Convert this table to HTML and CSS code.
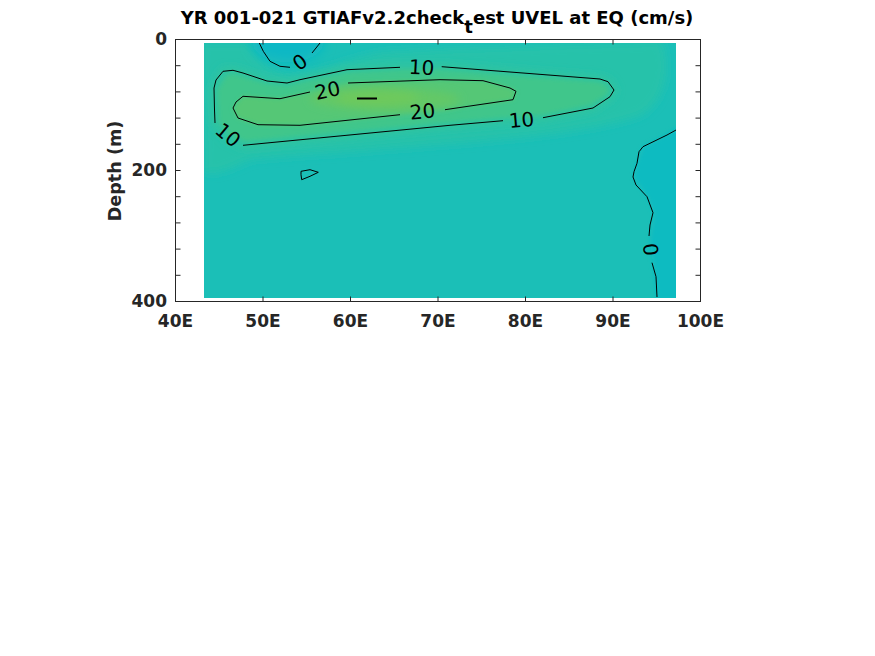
FILE: index.html
```html
<!DOCTYPE html>
<html>
<head>
<meta charset="utf-8">
<link rel="stylesheet" href="styles.css">
</head>
<body>
<div class="figure">
<svg class="plot" width="875" height="656" viewBox="0 0 875 656" xmlns="http://www.w3.org/2000/svg">
  <defs>
    <clipPath id="dataclip"><rect x="204" y="43" width="472" height="255"/></clipPath>
    <filter id="b6" x="-20%" y="-50%" width="140%" height="200%"><feGaussianBlur stdDeviation="6"/></filter>
    <filter id="b4" x="-20%" y="-50%" width="140%" height="200%"><feGaussianBlur stdDeviation="4"/></filter>
    <filter id="b2" x="-20%" y="-50%" width="140%" height="200%"><feGaussianBlur stdDeviation="2"/></filter>
  </defs>

  <text class="title" x="437" y="24">YR 001-021 GTIAFv2.2check<tspan dy="9">t</tspan><tspan dy="-9">est UVEL at EQ (cm/s)</tspan></text>

  <g clip-path="url(#dataclip)">
    <rect x="204" y="43" width="472" height="255" fill="#1bbfb7"/>
    <path fill="#10bbc1" filter="url(#b2)" d="M680,126 L664,136 L643,147 L636,165 L634,178 L648,198 L654,214 L650,240 L654,270 L657,300 L680,300 Z"/>
    <path fill="#25c2aa" filter="url(#b4)" d="M200,43 L250,43 C258,62 276,74 296,74 C322,72 342,60 382,52 L452,48 C522,46 602,42 662,42 C672,70 664,104 640,116 C590,134 480,142 400,148 C330,154 280,156 250,160 C232,168 216,176 204,172 Z"/>
    <ellipse cx="288" cy="42" rx="36" ry="20" fill="#0bb8c5" filter="url(#b6)"/>
    <path fill="#31c49d" stroke="#31c49d" stroke-width="5" stroke-linejoin="round" filter="url(#b4)" d="M400,67 L347,69.7 L300,79.7 L287,83 L267,81 L243,73 L233,70.3 L223,71.3 L214,88 L215,123 L228,138 L243,145.3 L450,125.3 L503,120.7 L523,119.5 L543,117.7 L593,108 L610,96.7 L614,90 L608,81.7 L600,79 L441.7,66.7 L421,66.9 Z"/>
    <path fill="#3fc68b" filter="url(#b2)" d="M400,70 L347,72.7 L300,82.7 L287,86 L267,84 L243,77 L233,74 L226,76 L218,90 L219,121 L230,134 L245,141 L450,122 L503,117.7 L543,114.7 L590,105 L606,95 L609,90 L604,84 L597,82 L441.7,70 Z"/>
    <path fill="#55c776" filter="url(#b2)" d="M310,92 L280,98.7 L243,96.3 L233,108 L238,118 L258,124.7 L300,125.3 L400,114.7 L422,112 L445,109.7 L513,99.7 L516,91.3 L510,88 L483,80.7 L440,79.7 L348,83 L328,88 Z"/>
    <ellipse cx="385" cy="99" rx="75" ry="11" fill="#64c866" filter="url(#b4)"/>
    <ellipse cx="378" cy="98" rx="42" ry="7" fill="#6ec95c" filter="url(#b4)"/>
  </g>

  <g class="contour">
    <path d="M400,67.3 L347,69.7 L300,79.7 L287,83 L267,81 L243,73 L233,70.3 L223,71.3 L216,80 L214,88 L214.5,110 L215,123"/>
    <path d="M243,145.3 L450,125.3 L503,120.7"/>
    <path d="M543,117.7 L593,108 L610,96.7 L614,90 L608,81.7 L600,79 L441.7,66.7"/>
    <path d="M310,92 L280,98.7 L243,96.3 L236,102 L233,108 L238,118 L258,124.7 L300,125.3 L400,114.7"/>
    <path d="M445,109.7 L513,99.7 L516,91.3 L510,88 L483,80.7 L440,79.7 L348,83"/>
    <path d="M259.3,43 L263.3,51.3 L270,61.3 L280,66.3 L290,67.3"/>
    <path d="M312,53 L320,43"/>
    <path d="M301,171.3 L310,169.7 L318.3,172.3 L310,176.3 L301.7,179.7 L301,174.7 Z"/>
    <path d="M676,130 L667,135 L643,146.7 L639,151.7 L637,163.3 L634,171.7 L633,177 L636,185 L647,196.7 L653,212.7 L650,225 L649,236"/>
    <path d="M652,262.7 L656,276.7 L657,297"/>
    <path class="dash" d="M357,98.5 L377,98.5"/>
  </g>

  <g class="clabels">
    <text transform="translate(421.5,67.5) rotate(3)">10</text>
    <text transform="translate(327.5,90.5) rotate(-12)">20</text>
    <text transform="translate(422.5,111.5) rotate(-6)">20</text>
    <text transform="translate(521.5,120) rotate(-5)">10</text>
    <text transform="translate(228,135) rotate(40)">10</text>
    <text transform="translate(300,62) rotate(-35)">0</text>
    <text transform="translate(650.5,249.5) rotate(85)">0</text>
  </g>

  <g class="axes">
    <rect x="175.5" y="39.5" width="525" height="262" fill="none"/>
    <path d="M175.5,65.7 h5 M175.5,91.9 h5 M175.5,118.1 h5 M175.5,144.3 h5 M175.5,170.5 h5 M175.5,196.7 h5 M175.5,222.9 h5 M175.5,249.1 h5 M175.5,275.3 h5"/>
    <path d="M700.5,65.7 h-5 M700.5,91.9 h-5 M700.5,118.1 h-5 M700.5,144.3 h-5 M700.5,170.5 h-5 M700.5,196.7 h-5 M700.5,222.9 h-5 M700.5,249.1 h-5 M700.5,275.3 h-5"/>
    <path d="M263,301.5 v-5 M350.5,301.5 v-5 M438,301.5 v-5 M525.5,301.5 v-5 M613,301.5 v-5"/>
    <path d="M263,39.5 v5 M350.5,39.5 v5 M438,39.5 v5 M525.5,39.5 v5 M613,39.5 v5"/>
  </g>

  <g class="yticks">
    <text x="167" y="45.3">0</text>
    <text x="167" y="176.3">200</text>
    <text x="167" y="307.3">400</text>
  </g>
  <g class="xticks">
    <text x="175.5" y="327">40E</text>
    <text x="263" y="327">50E</text>
    <text x="350.5" y="327">60E</text>
    <text x="438" y="327">70E</text>
    <text x="525.5" y="327">80E</text>
    <text x="613" y="327">90E</text>
    <text x="700.5" y="327">100E</text>
  </g>
  <text class="ylabel" transform="translate(121,171) rotate(-90)">Depth (m)</text>
</svg>
</div>
</body>
</html>
```

FILE: styles.css
```css
html, body {
  margin: 0;
  padding: 0;
  background: #ffffff;
}
.figure {
  width: 875px;
  height: 656px;
  overflow: hidden;
  background: #ffffff;
}
.plot {
  display: block;
}
.title {
  font-family: "DejaVu Sans", sans-serif;
  font-weight: bold;
  font-size: 18px;
  fill: #000000;
  text-anchor: middle;
}
.contour path {
  fill: none;
  stroke: #000000;
  stroke-width: 1;
  stroke-linejoin: round;
}
.contour .dash {
  stroke-width: 2;
}
.clabels text {
  font-family: "DejaVu Sans", sans-serif;
  font-size: 20px;
  fill: #000000;
  text-anchor: middle;
  dominant-baseline: central;
}
.axes rect,
.axes path {
  stroke: #262626;
  stroke-width: 1;
  fill: none;
}
.yticks text,
.xticks text {
  font-family: "DejaVu Sans", sans-serif;
  font-weight: bold;
  font-size: 17px;
  fill: #262626;
}
.yticks text {
  text-anchor: end;
}
.xticks text {
  text-anchor: middle;
}
.ylabel {
  font-family: "DejaVu Sans", sans-serif;
  font-weight: bold;
  font-size: 17.6px;
  fill: #262626;
  text-anchor: middle;
}
```
